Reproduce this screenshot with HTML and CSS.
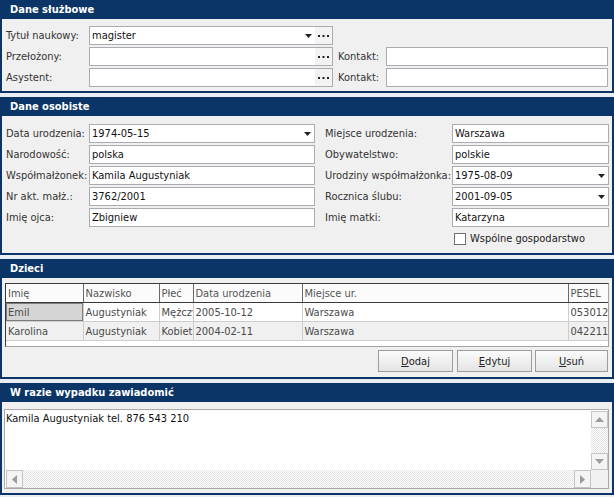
FILE: index.html
```html
<!DOCTYPE html>
<html lang="pl">
<head>
<meta charset="utf-8">
<link rel="stylesheet" href="styles.css">
</head>
<body>
<section class="panel">
  <div class="ph">Dane służbowe</div>
  <div class="pb form1">
    <div class="lbl">Tytuł naukowy:</div>
    <div class="fld"><span class="val">magister</span><span class="arrow"><svg width="7" height="4" viewBox="0 0 7 4"><path d="M0 0H7L3.5 4Z" fill="#222"/></svg></span><span class="dots"><svg width="11" height="2" viewBox="0 0 11 2"><rect x="0" y="0" width="2" height="2" fill="#222"/><rect x="4.5" y="0" width="2" height="2" fill="#222"/><rect x="9" y="0" width="2" height="2" fill="#222"/></svg></span></div>
    <div></div><div></div>
    <div class="lbl">Przełożony:</div>
    <div class="fld"><span class="val"></span><span class="dots"><svg width="11" height="2" viewBox="0 0 11 2"><rect x="0" y="0" width="2" height="2" fill="#222"/><rect x="4.5" y="0" width="2" height="2" fill="#222"/><rect x="9" y="0" width="2" height="2" fill="#222"/></svg></span></div>
    <div class="lbl r1">Kontakt:</div>
    <div class="fld"><span class="val"></span></div>
    <div class="lbl">Asystent:</div>
    <div class="fld"><span class="val"></span><span class="dots"><svg width="11" height="2" viewBox="0 0 11 2"><rect x="0" y="0" width="2" height="2" fill="#222"/><rect x="4.5" y="0" width="2" height="2" fill="#222"/><rect x="9" y="0" width="2" height="2" fill="#222"/></svg></span></div>
    <div class="lbl r1">Kontakt:</div>
    <div class="fld"><span class="val"></span></div>
  </div>
</section>

<section class="panel">
  <div class="ph">Dane osobiste</div>
  <div class="pb form2">
    <div class="lbl">Data urodzenia:</div>
    <div class="fld"><span class="val">1974-05-15</span><span class="arrow"><svg width="7" height="4" viewBox="0 0 7 4"><path d="M0 0H7L3.5 4Z" fill="#222"/></svg></span></div>
    <div class="lbl r2">Miejsce urodzenia:</div>
    <div class="fld"><span class="val">Warszawa</span></div>

    <div class="lbl">Narodowość:</div>
    <div class="fld"><span class="val">polska</span></div>
    <div class="lbl r2">Obywatelstwo:</div>
    <div class="fld"><span class="val">polskie</span></div>

    <div class="lbl">Współmałżonek:</div>
    <div class="fld"><span class="val">Kamila Augustyniak</span></div>
    <div class="lbl r2">Urodziny współmałżonka:</div>
    <div class="fld"><span class="val">1975-08-09</span><span class="arrow"><svg width="7" height="4" viewBox="0 0 7 4"><path d="M0 0H7L3.5 4Z" fill="#222"/></svg></span></div>

    <div class="lbl">Nr akt. małż.:</div>
    <div class="fld"><span class="val">3762/2001</span></div>
    <div class="lbl r2">Rocznica ślubu:</div>
    <div class="fld"><span class="val">2001-09-05</span><span class="arrow"><svg width="7" height="4" viewBox="0 0 7 4"><path d="M0 0H7L3.5 4Z" fill="#222"/></svg></span></div>

    <div class="lbl">Imię ojca:</div>
    <div class="fld"><span class="val">Zbigniew</span></div>
    <div class="lbl r2">Imię matki:</div>
    <div class="fld"><span class="val">Katarzyna</span></div>

    <div class="chkrow"><span class="chk"></span><span>Wspólne gospodarstwo</span></div>
  </div>
</section>

<section class="panel">
  <div class="ph">Dzieci</div>
  <div class="pb kids">
    <div class="grid">
      <table>
        <colgroup><col class="c1"><col class="c2"><col class="c3"><col class="c4"><col class="c5"><col class="c6"></colgroup>
        <thead>
          <tr><th>Imię</th><th>Nazwisko</th><th>Płeć</th><th>Data urodzenia</th><th>Miejsce ur.</th><th>PESEL</th></tr>
        </thead>
        <tbody>
          <tr><td class="sel">Emil</td><td>Augustyniak</td><td>Mężczyzna</td><td>2005-10-12</td><td>Warszawa</td><td>05301234567</td></tr>
          <tr class="alt"><td>Karolina</td><td>Augustyniak</td><td>Kobieta</td><td>2004-02-11</td><td>Warszawa</td><td>04221134567</td></tr>
        </tbody>
      </table>
    </div>
    <div class="btns">
      <div class="btn b1"><span><u>D</u>odaj</span></div>
      <div class="btn b2"><span><u>E</u>dytuj</span></div>
      <div class="btn b3"><span><u>U</u>suń</span></div>
    </div>
  </div>
</section>

<section class="panel">
  <div class="ph">W razie wypadku zawiadomić</div>
  <div class="pb notes">
    <div class="ta">
      <div class="tatext">Kamila Augustyniak tel. 876 543 210</div>
      <div class="vs">
        <div class="sb"><svg width="9" height="5" viewBox="0 0 9 5"><path d="M0 5H9L4.5 0Z" fill="#9c9c9c"/></svg></div>
        <div class="track"></div>
        <div class="sb"><svg width="9" height="5" viewBox="0 0 9 5"><path d="M0 0H9L4.5 5Z" fill="#9c9c9c"/></svg></div>
      </div>
      <div class="hs">
        <div class="sb"><svg width="5" height="9" viewBox="0 0 5 9"><path d="M5 0V9L0 4.5Z" fill="#9c9c9c"/></svg></div>
        <div class="track"></div>
        <div class="sb"><svg width="5" height="9" viewBox="0 0 5 9"><path d="M0 0V9L5 4.5Z" fill="#9c9c9c"/></svg></div>
      </div>
      <div class="corner"></div>
    </div>
  </div>
</section>
</body>
</html>
```

FILE: styles.css
```css
html, body {
  margin: 0;
  padding: 0;
}
body {
  width: 614px;
  height: 497px;
  overflow: hidden;
  background: #e9eef4;
  font-family: "DejaVu Sans Condensed", "DejaVu Sans", sans-serif;
  font-stretch: condensed;
  font-size: 11px;
  color: #1e1e1e;
}
.panel {
  border: 2px solid #0b3566;
  border-top: 0;
  background: #f0f0f0;
  margin-bottom: 4px;
}
.ph {
  background: #0b3566;
  color: #fff;
  font-weight: bold;
  font-size: 11px;
  height: 19px;
  line-height: 19px;
  padding-left: 8px;
}
.pb {
  padding: 7px 4px 4px 2px;
}
.form1 {
  display: grid;
  grid-template-columns: 85px 244px 53px 222px;
  grid-auto-rows: 19px;
  row-gap: 2px;
}
.form2 {
  display: grid;
  grid-template-columns: 85px 226px 137px 157px;
  grid-auto-rows: 19px;
  row-gap: 2px;
  padding: 8px 3px 5px 2px;
}
.lbl {
  line-height: 19px;
  white-space: nowrap;
  color: #333;
  padding-left: 2px;
}
.lbl.r1 { padding-left: 5px; }
.lbl.r2 { padding-left: 10px; }
.fld {
  box-sizing: border-box;
  height: 19px;
  border: 1px solid #a9adb2;
  background: #fff;
  display: flex;
  align-items: center;
}
.val {
  flex: 1;
  padding-left: 2px;
  white-space: nowrap;
  overflow: hidden;
  color: #111;
}
.arrow {
  width: 14px;
  display: flex;
  justify-content: center;
  align-items: center;
}
.dots {
  width: 17px;
  height: 17px;
  display: flex;
  align-items: center;
  justify-content: center;
  background: #f3f3f3;
}
.chkrow {
  grid-column: 4;
  display: flex;
  align-items: center;
  gap: 4px;
  padding-left: 2px;
  color: #222;
}
.chk {
  box-sizing: border-box;
  width: 12px;
  height: 12px;
  border: 1px solid #6f6f6f;
  background: #fff;
}
.kids {
  padding: 5px 3px 5px 3px;
}
.grid {
  box-sizing: border-box;
  height: 64px;
  border: 1px solid;
  border-color: #3a3a3a #a3a3a3 #a3a3a3 #3a3a3a;
  background: #fff;
  overflow: hidden;
}
table {
  border-collapse: collapse;
  table-layout: fixed;
  width: 602px;
}
col.c1 { width: 77px; }
col.c2 { width: 76px; }
col.c3 { width: 34px; }
col.c4 { width: 109px; }
col.c5 { width: 266px; }
col.c6 { width: 40px; }
th, td {
  height: 18px;
  padding: 0 2px;
  text-align: left;
  font-weight: normal;
  white-space: nowrap;
  overflow: hidden;
}
th {
  background: #fbfbfb;
  color: #555;
  border-right: 1px solid #6a6a6a;
  border-bottom: 1px solid #3a3a3a;
}
td {
  color: #4a4a4a;
  border-right: 1px solid #cdcdcd;
  border-bottom: 1px solid #cdcdcd;
}
tr.alt td { background: #f0f0f0; }
td.sel {
  background: #d5d5d5;
  box-shadow: inset 0 0 0 1px #7d7d7d;
}
.btns {
  display: flex;
  justify-content: flex-end;
  gap: 3px;
  margin-top: 3px;
  padding-right: 1px;
}
.btn {
  box-sizing: border-box;
  height: 22px;
  border: 1px solid #9c9c9c;
  background: linear-gradient(#fbfbfb, #e4e4e4);
  display: flex;
  align-items: center;
  justify-content: center;
  color: #222;
}
.b1 { width: 75px; margin-right: 1px; }
.b2 { width: 75px; }
.b3 { width: 73px; }
.notes {
  padding: 7px 3px 4px 2px;
}
.ta {
  box-sizing: border-box;
  height: 80px;
  border: 1px solid #a8a8a8;
  background: #fff;
  display: grid;
  grid-template-columns: 1fr 17px;
  grid-template-rows: 1fr 18px;
}
.tatext {
  padding: 2px 1px;
  line-height: 14px;
  color: #111;
}
.vs, .hs {
  display: flex;
}
.vs { flex-direction: column; padding-top: 1px; }
.hs { flex-direction: row; padding-left: 1px; }
.track {
  flex: 1;
  background-color: #fff;
  background-image: conic-gradient(#e3e3e3 25%, #fff 0 50%, #e3e3e3 0 75%, #fff 0);
  background-size: 2px 2px;
}
.sb {
  box-sizing: border-box;
  width: 17px;
  height: 17px;
  background: #f4f4f4;
  border: 1px solid #c4c4c4;
  display: flex;
  align-items: center;
  justify-content: center;
}
.hs .sb { height: 18px; }
.corner {
  background: #f0f0f0;
}
```
